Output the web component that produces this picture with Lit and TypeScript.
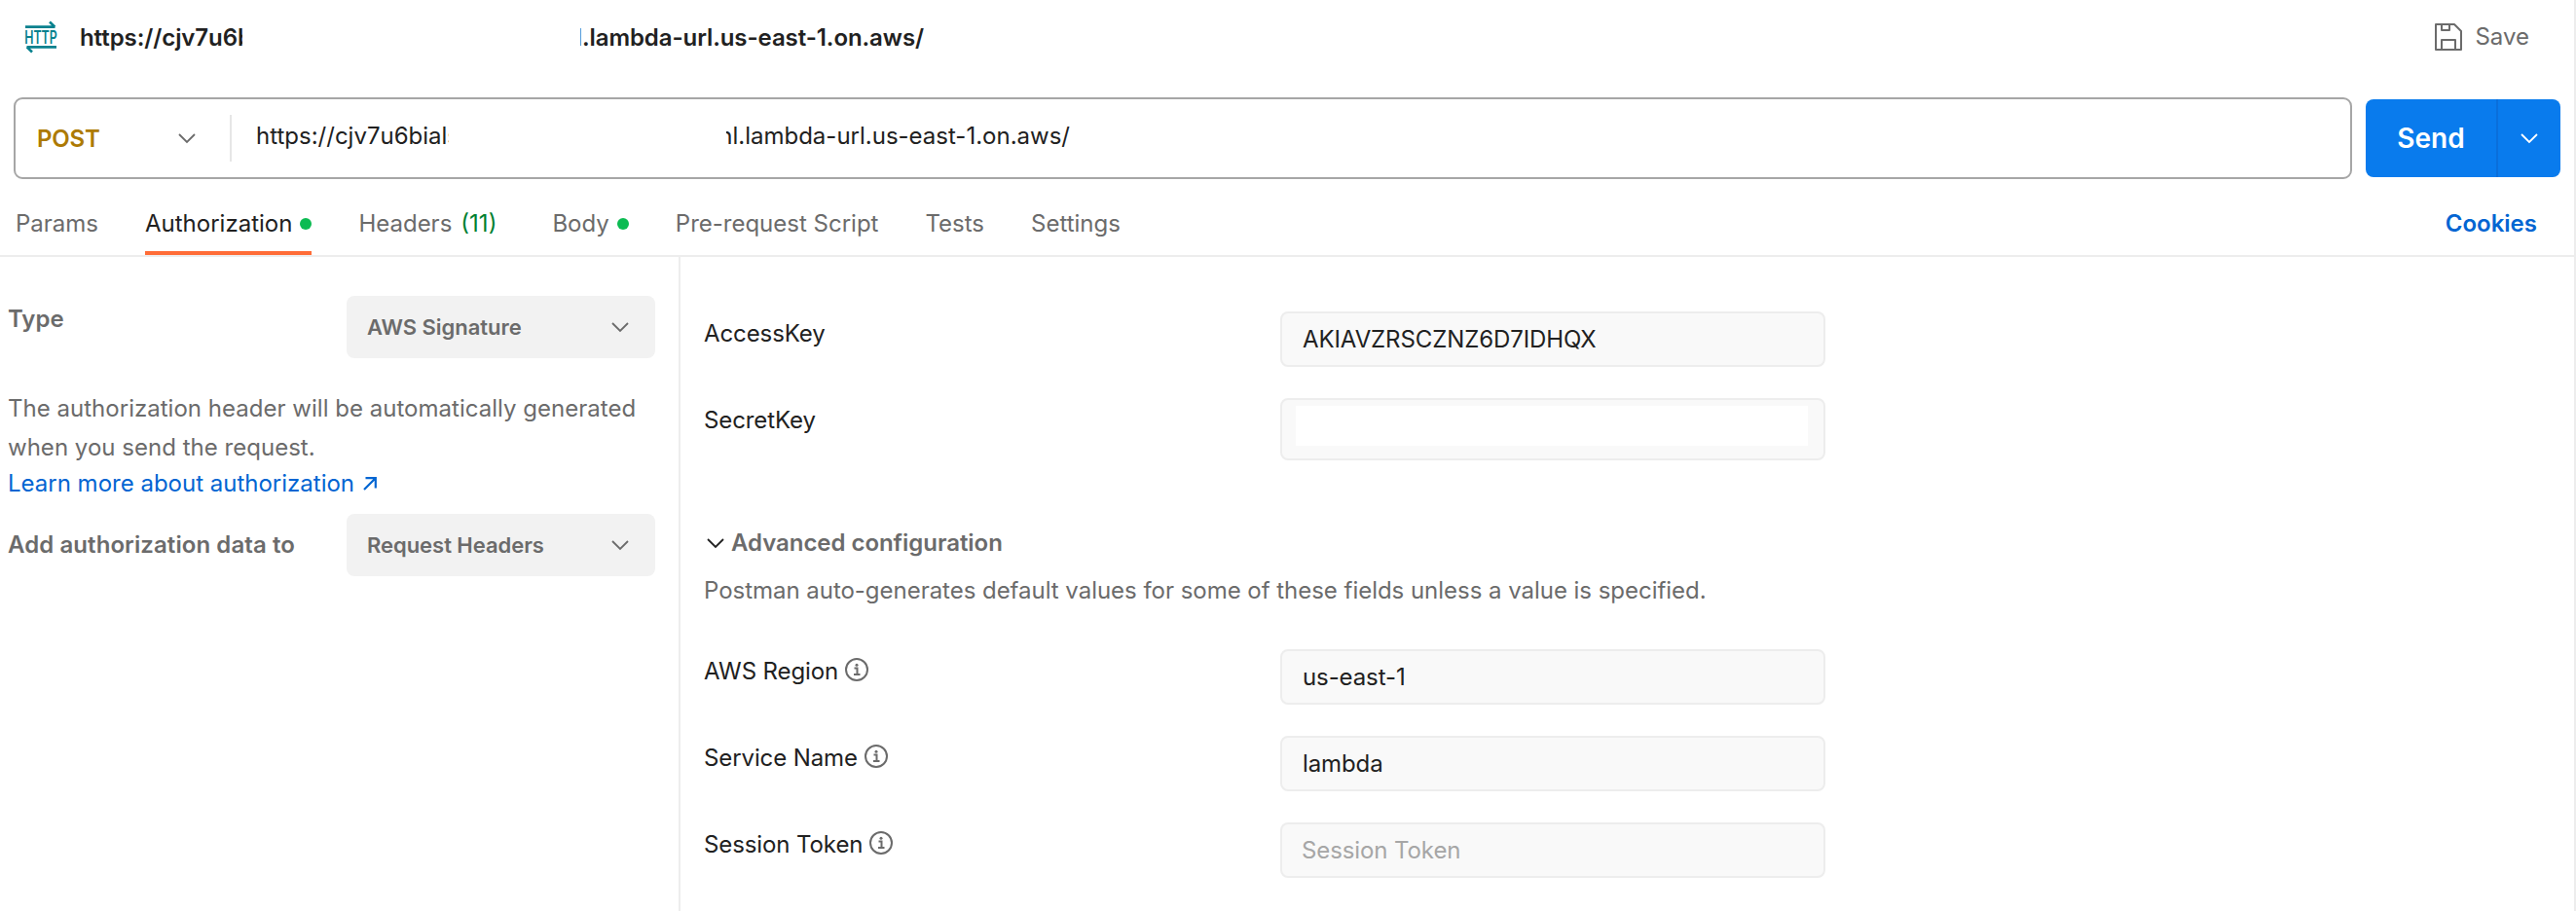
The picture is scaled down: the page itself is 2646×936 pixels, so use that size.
import { LitElement, html, css, svg, nothing } from "lit";
import { customElement, property } from "lit/decorators.js";

type Tab = { label: string; active?: boolean; dot?: boolean; count?: number };
type Field = { label: string; value?: string; placeholder?: string; info?: boolean; masked?: boolean };

const TABS: Tab[] = [
  { label: "Params" },
  { label: "Authorization", active: true, dot: true },
  { label: "Headers", count: 11 },
  { label: "Body", dot: true },
  { label: "Pre-request Script" },
  { label: "Tests" },
  { label: "Settings" },
];

const KEYS: Field[] = [
  { label: "AccessKey", value: "AKIAVZRSCZNZ6D7IDHQX" },
  { label: "SecretKey", masked: true },
];

const ADVANCED: Field[] = [
  { label: "AWS Region", value: "us-east-1", info: true },
  { label: "Service Name", value: "lambda", info: true },
  { label: "Session Token", placeholder: "Session Token", info: true },
];

const chevron = html`<svg class="chevron" width="20" height="12" viewBox="0 0 20 12" fill="none"
  stroke="currentColor" stroke-width="1.8">${svg`<path d="M2 2l8 8 8-8" />`}</svg>`;

@customElement("select-box")
export class SelectBox extends LitElement {
  @property() value = "";

  static styles = css`
    :host {
      display: flex;
      align-items: center;
      justify-content: space-between;
      box-sizing: border-box;
      width: 317px;
      height: 64px;
      padding: 0 26px 0 21px;
      border-radius: 8px;
      background: #f2f2f2;
      color: #6b6b6b;
      font-size: 22px;
      font-weight: 600;
      letter-spacing: -0.04px;
    }
    .chevron {
      display: block;
    }
  `;

  render() {
    return html`<span>${this.value}</span>${chevron}`;
  }
}

@customElement("form-row")
export class FormRow extends LitElement {
  @property({ attribute: false }) field!: Field;

  static styles = css`
    :host {
      display: grid;
      grid-template-columns: 592px 560px;
      align-items: start;
    }
    .label {
      display: flex;
      align-items: center;
      gap: 7px;
      padding-top: 3px;
      line-height: 40px;
      letter-spacing: -0.1px;
    }
    .info {
      display: block;
      color: #6b6b6b;
      margin-top: -4px;
    }
    .box {
      display: flex;
      align-items: center;
      box-sizing: border-box;
      height: 57px;
      padding: 0 21px;
      border: 2px solid #ededed;
      border-radius: 8px;
      background: #f9f9f9;
      letter-spacing: -0.1px;
    }
    .box.masked {
      height: 64px;
      padding: 6px 16px 13px 14px;
    }
    .mask {
      flex: 1;
      align-self: stretch;
      background: #fff;
    }
    .placeholder {
      margin-left: -1px;
      color: #a6a6a6;
    }
  `;

  render() {
    const f = this.field;
    return html`
      <div class="label">
        <span>${f.label}</span>
        ${f.info
          ? html`<svg class="info" width="24" height="24" viewBox="0 0 24 24" fill="none" stroke="currentColor" stroke-width="2">
              <circle cx="12" cy="12" r="11" />
              <path d="M9.5 10.5h3v7M9 17h6.5" />
              <circle cx="12" cy="7.3" r="1.5" fill="currentColor" stroke="none" />
            </svg>`
          : nothing}
      </div>
      ${f.masked
        ? html`<div class="box masked"><div class="mask"></div></div>`
        : html`<div class="box">
            <span class=${f.value ? "value" : "placeholder"}>${f.value ?? f.placeholder}</span>
          </div>`}
    `;
  }
}

@customElement("app-root")
export class AppRoot extends LitElement {
  static styles = css`
    :host {
      display: flex;
      flex-direction: column;
      box-sizing: border-box;
      width: 2646px;
      height: 936px;
      overflow: hidden;
      border-right: 2px solid #ededed;
      background: #fff;
      color: #212121;
      font: 400 24px/40px Inter, "Liberation Sans", sans-serif;
      white-space: nowrap;
    }
    svg {
      display: block;
      flex: none;
    }
    .header {
      display: flex;
      align-items: flex-start;
      box-sizing: border-box;
      height: 100px;
      padding: 19px 46px 0 24px;
    }
    .http {
      margin-top: 1px;
      color: #07818e;
      overflow: visible;
    }
    .http-text {
      font: 600 18px Inter, sans-serif;
    }
    .clip {
      display: flex;
      overflow: hidden;
    }
    .clip.end {
      justify-content: flex-end;
    }
    .title {
      display: flex;
      gap: 347px;
      margin-left: 22px;
      font-weight: 600;
      letter-spacing: -0.08px;
    }
    .title .start {
      width: 167px;
    }
    .title .end {
      width: 353px;
    }
    .save {
      display: flex;
      gap: 13px;
      margin: -1px 0 0 auto;
      color: #6b6b6b;
    }
    .save svg {
      margin-top: 6px;
    }
    .request {
      display: flex;
      align-items: center;
      gap: 14px;
      height: 84px;
      padding: 0 14px;
    }
    .bar {
      display: flex;
      flex: 1;
      align-items: center;
      box-sizing: border-box;
      height: 84px;
      border: 2px solid #a6a6a6;
      border-radius: 9px;
    }
    .method {
      display: flex;
      align-items: center;
      justify-content: space-between;
      box-sizing: border-box;
      width: 222px;
      height: 48px;
      padding: 0 34px 0 22px;
      border-right: 2px solid #e6e6e6;
      color: #6b6b6b;
    }
    .post {
      padding-top: 1px;
      color: #ad7a03;
      font-weight: 600;
      letter-spacing: -0.2px;
    }
    .url {
      display: flex;
      gap: 285px;
      margin: -5px 0 0 25px;
    }
    .url .start {
      width: 198px;
    }
    .url .end {
      width: 353px;
    }
    .send {
      display: flex;
      width: 200px;
      height: 80px;
      overflow: hidden;
      border-radius: 8px;
      background: #097bed;
      color: #fff;
      font-size: 28px;
      font-weight: 600;
    }
    .send-label {
      display: grid;
      place-items: center;
      width: 134px;
      border-right: 2px solid #0a6fdb;
    }
    .send-more {
      display: grid;
      flex: 1;
      place-items: center;
    }
    .tabs {
      display: flex;
      gap: 48px;
      box-sizing: border-box;
      height: 80px;
      padding: 0 38px 0 16px;
      border-bottom: 2px solid #ededed;
      color: #6b6b6b;
    }
    .tab {
      display: flex;
      gap: 8px;
      box-sizing: border-box;
      padding-top: 26px;
      border-bottom: 4px solid transparent;
    }
    .tab.active {
      border-color: #ff6c37;
      color: #212121;
    }
    .dot {
      width: 12px;
      height: 12px;
      margin-top: 14px;
      border-radius: 50%;
      background: #0cbb52;
    }
    .count {
      margin: 0 9px 0 1px;
      color: #007f31;
    }
    .cookies {
      margin-left: auto;
      padding-top: 26px;
      color: #0265d2;
      font-weight: 600;
    }
    .body {
      display: flex;
      flex: 1;
      min-height: 0;
    }
    .side {
      box-sizing: border-box;
      width: 699px;
      padding: 40px 24px 0 8px;
      border-right: 2px solid #ededed;
      color: #6b6b6b;
    }
    .pair {
      display: flex;
      justify-content: space-between;
      font-weight: 600;
    }
    .type {
      padding-top: 4px;
    }
    .target {
      padding-top: 12px;
      letter-spacing: 0.08px;
    }
    .note {
      margin: 32px 0 0;
      white-space: normal;
      letter-spacing: 0.02px;
    }
    .learn {
      display: flex;
      gap: 9px;
      margin: -1px 0 13px;
      color: #0265d2;
      line-height: 36px;
    }
    .learn svg {
      margin-top: 11px;
    }
    .main {
      padding: 56px 0 0 24px;
    }
    .rows {
      display: grid;
      gap: 32px;
    }
    .advanced {
      display: flex;
      align-items: center;
      gap: 6px;
      margin-top: 65px;
      padding-left: 2px;
      font-weight: 600;
      letter-spacing: -0.04px;
    }
    .advanced-title {
      color: #6b6b6b;
    }
    .hint {
      margin: 9px 0 40px;
      color: #6b6b6b;
      letter-spacing: -0.03px;
    }
  `;

  render() {
    return html`
      <div class="header">
        <svg class="http" width="36" height="36" viewBox="0 0 36 36" fill="none" stroke="currentColor" stroke-width="2.6">
          <path d="M2 7.6h30.5M27 2.5l5.4 5.1M34 28.4H3.5M9 33.5l-5.4-5.1" />
          <text class="http-text" x="1.2" y="24.7" textLength="33.5" lengthAdjust="spacingAndGlyphs"
            fill="currentColor" stroke="none">HTTP</text>
        </svg>
        <div class="title">
          <span class="clip start"><span>https://cjv7u6b</span></span>
          <span class="clip end"><span>l.lambda-url.us-east-1.on.aws/</span></span>
        </div>
        <div class="save">
          <svg width="28" height="28" viewBox="0 0 28 28" fill="none" stroke="currentColor" stroke-width="2" stroke-linejoin="round">
            <path d="M1 1h19l7 7v19H1zM7 1v6h8V1M7 27V17h14v10" />
          </svg>
          <span>Save</span>
        </div>
      </div>

      <div class="request">
        <div class="bar">
          <div class="method"><span class="post">POST</span>${chevron}</div>
          <div class="url">
            <span class="clip start"><span>https://cjv7u6bials</span></span>
            <span class="clip end"><span>nl.lambda-url.us-east-1.on.aws/</span></span>
          </div>
        </div>
        <div class="send">
          <span class="send-label">Send</span>
          <span class="send-more">${chevron}</span>
        </div>
      </div>

      <div class="tabs">
        ${TABS.map(
          (t) => html`<div class="tab ${t.active ? "active" : ""}">
            <span>${t.label}</span>
            ${t.count ? html`<span class="count">(${t.count})</span>` : nothing}
            ${t.dot ? html`<span class="dot"></span>` : nothing}
          </div>`
        )}
        <span class="cookies">Cookies</span>
      </div>

      <div class="body">
        <div class="side">
          <div class="pair">
            <span class="type">Type</span>
            <select-box value="AWS Signature"></select-box>
          </div>
          <p class="note">The authorization header will be automatically generated<br />when you send the request.</p>
          <div class="learn">
            <span>Learn more about authorization</span>
            <svg width="14" height="14" viewBox="0 0 14 14" fill="none" stroke="currentColor" stroke-width="2.2">
              <path d="M1 13L12.5 1.5M2.5 1.2h10.3v10.3" />
            </svg>
          </div>
          <div class="pair">
            <span class="target">Add authorization data to</span>
            <select-box value="Request Headers"></select-box>
          </div>
        </div>

        <div class="main">
          <div class="rows">${KEYS.map((f) => html`<form-row .field=${f}></form-row>`)}</div>
          <div class="advanced">${chevron}<span class="advanced-title">Advanced configuration</span></div>
          <p class="hint">Postman auto-generates default values for some of these fields unless a value is specified.</p>
          <div class="rows">${ADVANCED.map((f) => html`<form-row .field=${f}></form-row>`)}</div>
        </div>
      </div>
    `;
  }
}
